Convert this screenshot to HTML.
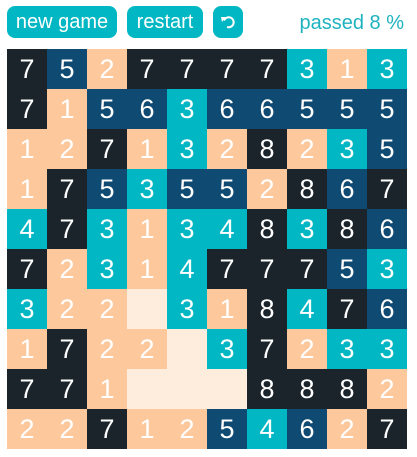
<!DOCTYPE html><html><head><style>
body{margin:0;width:417px;height:457px;background:#fff;font-family:"Liberation Sans",sans-serif;position:relative;overflow:hidden}
.b{position:absolute;top:6px;height:32px;background:#00b7c3;color:#fff;border-radius:8px;font-size:20px;line-height:32px;text-align:center}
#p{position:absolute;right:13px;top:8px;color:#1fb3c0;font-size:20px;line-height:30px}
#g{position:absolute;left:7px;top:49px;width:400px;display:grid;grid-template-columns:repeat(10,40px);grid-auto-rows:40px}
#g div{color:#fff;font-size:27px;text-align:center;line-height:40px}
.a{background:#fdc89c}.t{background:#00b7c3}.n{background:#0e4a72}.d{background:#1b242b}.e{background:#feeddd}
</style></head><body>
<div class="b" style="left:7px;width:110px">new game</div>
<div class="b" style="left:127px;width:76px">restart</div>
<div class="b" style="left:213px;width:30px"><svg width="30" height="32" viewBox="0 0 30 32"><path d="M11 14.5 A5 5 0 1 1 14 21" fill="none" stroke="#fff" stroke-width="2"/><path d="M8 11 L12.5 11 L9 16 Z" fill="#fff"/></svg></div>
<div id="p">passed 8 %</div>
<div id="g"></div>
<script>
var r=["7527777313","7156366555","1271328235","1753552867","4731348386","7231477753","3220318476","1722037233","7710008882","2271254627"];
var c={1:'a',2:'a',3:'t',4:'t',5:'n',6:'n',7:'d',8:'d',0:'e'};
var h='';r.forEach(function(s){for(var i=0;i<10;i++){var v=s[i];h+='<div class="'+c[v]+'">'+(v=='0'?'':v)+'</div>';}});
document.getElementById('g').innerHTML=h;
</script>
</body></html>
